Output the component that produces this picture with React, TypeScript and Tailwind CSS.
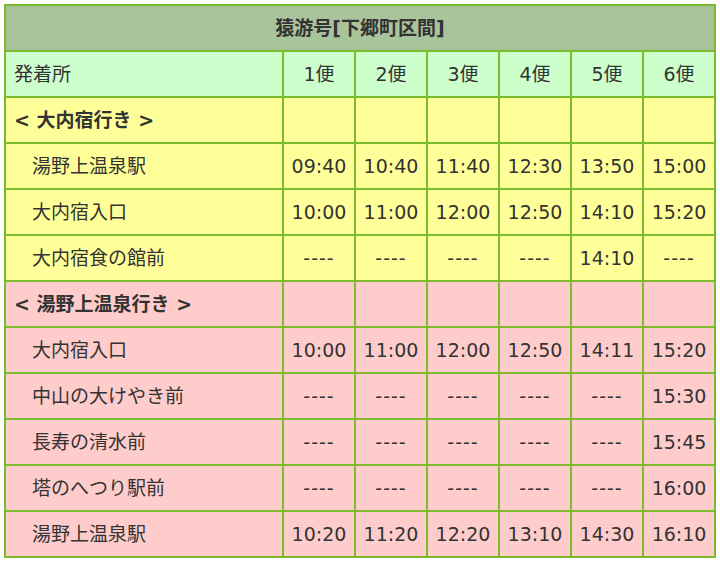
const times: { name: string; t: string[] }[] = [
  { name: '湯野上温泉駅', t: ['09:40', '10:40', '11:40', '12:30', '13:50', '15:00'] },
  { name: '大内宿入口', t: ['10:00', '11:00', '12:00', '12:50', '14:10', '15:20'] },
  { name: '大内宿食の館前', t: ['----', '----', '----', '----', '14:10', '----'] },
]

const returns: { name: string; t: string[] }[] = [
  { name: '大内宿入口', t: ['10:00', '11:00', '12:00', '12:50', '14:11', '15:20'] },
  { name: '中山の大けやき前', t: ['----', '----', '----', '----', '----', '15:30'] },
  { name: '長寿の清水前', t: ['----', '----', '----', '----', '----', '15:45'] },
  { name: '塔のへつり駅前', t: ['----', '----', '----', '----', '----', '16:00'] },
  { name: '湯野上温泉駅', t: ['10:20', '11:20', '12:20', '13:10', '14:30', '16:10'] },
]

const cell = 'border border-[#7cbb2e] align-middle'

function Section({ title, rows, bg }: { title: string; rows: { name: string; t: string[] }[]; bg: string }) {
  return (
    <>
      <tr className={`h-[46px] ${bg}`}>
        <td className={`${cell} pl-[8px] font-bold`}>{title}</td>
        {[0, 1, 2, 3, 4, 5].map((i) => (
          <td key={i} className={cell}></td>
        ))}
      </tr>
      {rows.map((r, idx) => (
        <tr key={idx} className={`h-[46px] ${bg}`}>
          <td className={`${cell} pl-[26px]`}>{r.name}</td>
          {r.t.map((v, i) => (
            <td key={i} className={`${cell} text-center`}>
              {v === '----' ? <span className="tracking-[1px]">{v}</span> : v}
            </td>
          ))}
        </tr>
      ))}
    </>
  )
}

export default function App() {
  return (
    <div className="w-[720px] h-[561px] bg-white pt-[4px] pl-[4px]">
      <table
        className="table-fixed w-[712px] border-separate border-spacing-0 border border-[#7cbb2e] text-[19px] leading-none text-[#333333]"
        style={{ fontFamily: '"DejaVu Sans", "Noto Sans CJK JP", sans-serif' }}
      >
        <colgroup>
          <col className="w-[278px]" />
          <col className="w-[72px]" />
          <col className="w-[72px]" />
          <col className="w-[72px]" />
          <col className="w-[72px]" />
          <col className="w-[72px]" />
          <col className="w-[72px]" />
        </colgroup>
        <tbody>
          <tr className="h-[46px] bg-[#a9c39b]">
            <td colSpan={7} className={`${cell} text-center font-bold`}>
              猿游号[下郷町区間]
            </td>
          </tr>
          <tr className="h-[46px] bg-[#ccffcc]">
            <td className={`${cell} pl-[8px]`}>発着所</td>
            {['1便', '2便', '3便', '4便', '5便', '6便'].map((h) => (
              <td key={h} className={`${cell} text-center`}>
                {h}
              </td>
            ))}
          </tr>
          <Section title="< 大内宿行き >" rows={times} bg="bg-[#ffff99]" />
          <Section title="< 湯野上温泉行き >" rows={returns} bg="bg-[#ffcccc]" />
        </tbody>
      </table>
    </div>
  )
}
